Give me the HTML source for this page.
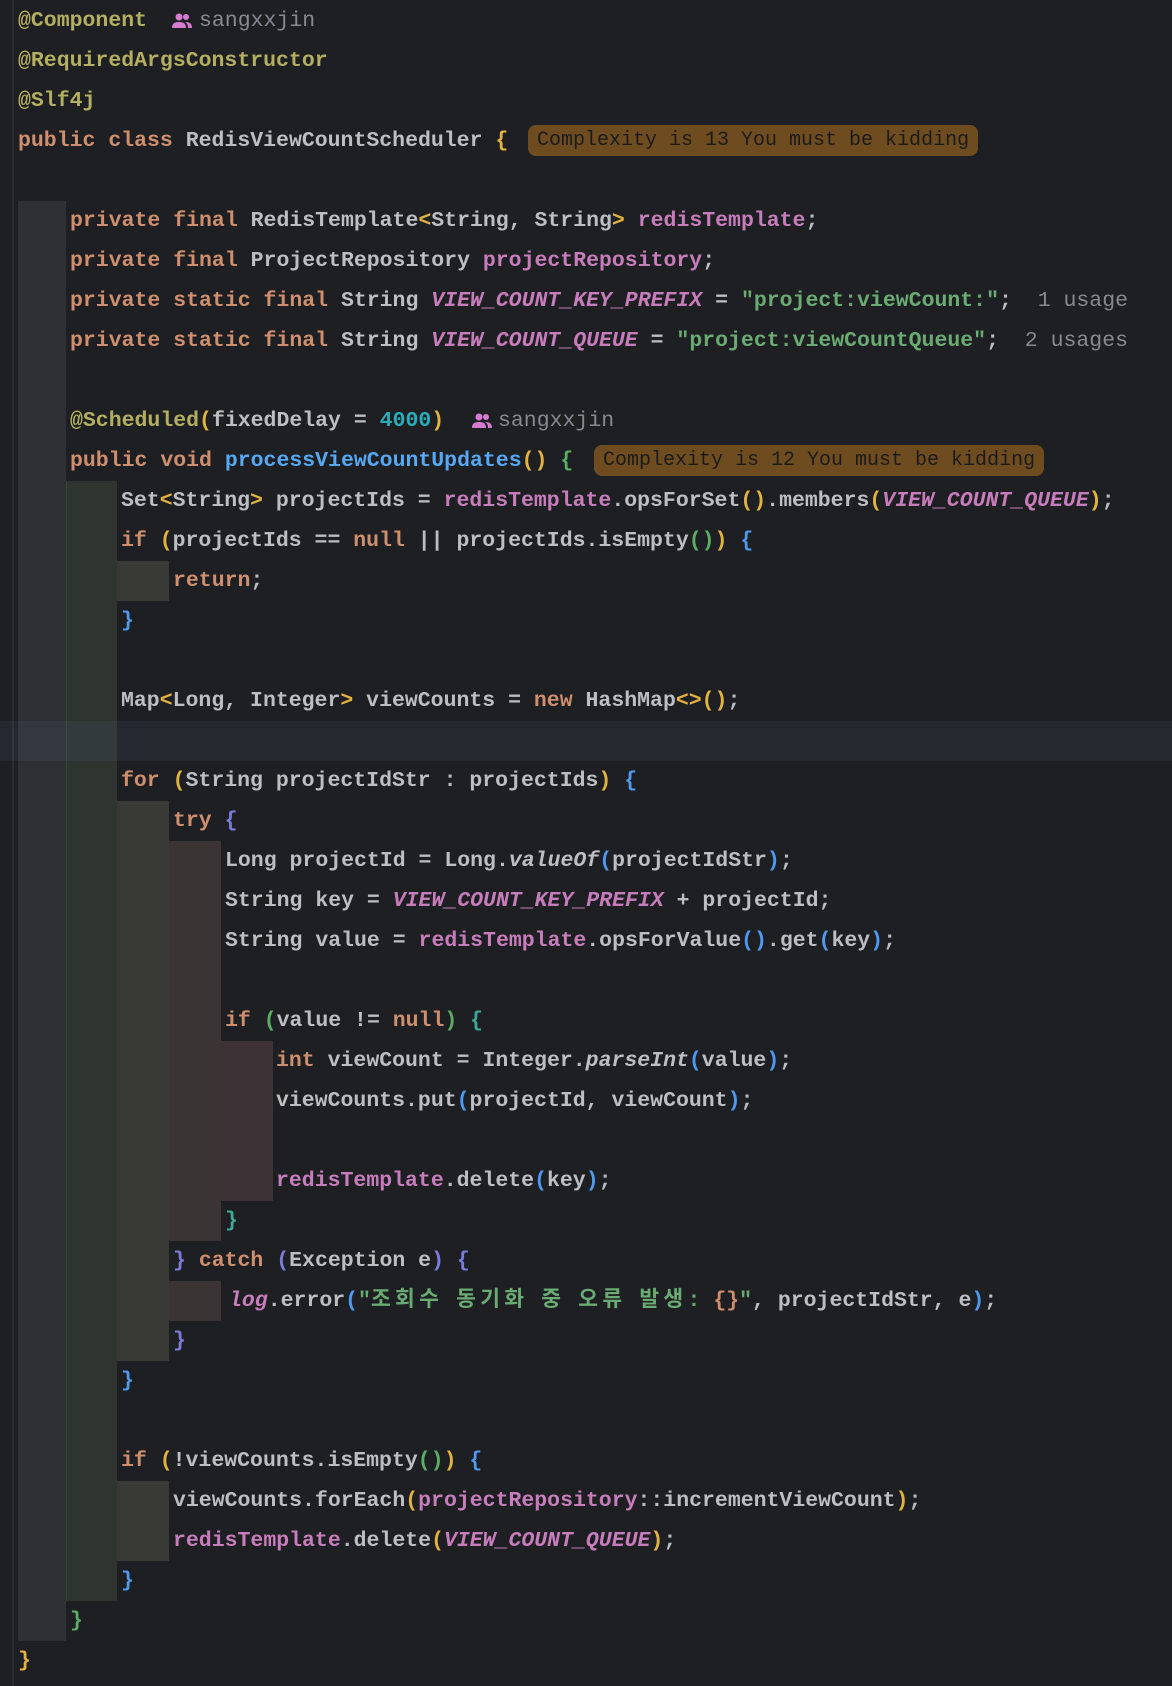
<!DOCTYPE html>
<html><head><meta charset="utf-8"><style>
html,body{margin:0;padding:0;}
body{width:1172px;height:1686px;background:#1e1f22;position:relative;overflow:hidden;font-family:"Liberation Mono","Noto Sans CJK KR",monospace;font-size:21.5px;color:#bcbec4;font-weight:bold;}
.l{position:absolute;height:40px;line-height:40px;white-space:pre;left:18px;}
.b{position:absolute;}
.k{color:#cf8e6d}.a{color:#b3ae60}.f{color:#c77dbb}.s{color:#6aab73}.n{color:#2aacb8}.m{color:#56a8f5}.g{color:#868a91;font-weight:normal}.i{font-style:italic}
.y{color:#e3b341}.gr{color:#5aaf65}.bl{color:#4d9af0}.p{color:#7a7ddc}.t{color:#3fa89a}.o{color:#cf8e6d}
.badge{position:absolute;background:#6f4c20;color:#1b1b1b;border-radius:8px;height:31px;line-height:31px;padding:0 9px;white-space:pre;font-size:20px;font-weight:normal;}
.hg{letter-spacing:4.3px}
</style></head><body>
<div class="b" style="left:12px;top:0;width:2px;height:1686px;background:#2b2d30"></div>
<div class="b" style="left:18px;top:201px;width:48px;height:1440px;background:#2f3035"></div>
<div class="b" style="left:66px;top:481px;width:51px;height:1120px;background:#2e3430"></div>
<div class="b" style="left:66px;top:481px;width:1px;height:1120px;background:#2f4a30"></div>
<div class="b" style="left:117px;top:561px;width:52px;height:40px;background:#393a36"></div>
<div class="b" style="left:117px;top:801px;width:52px;height:560px;background:#393a36"></div>
<div class="b" style="left:117px;top:1481px;width:52px;height:80px;background:#393a36"></div>
<div class="b" style="left:169px;top:841px;width:52px;height:400px;background:#3a3534"></div>
<div class="b" style="left:169px;top:1281px;width:52px;height:40px;background:#3a3534"></div>
<div class="b" style="left:221px;top:1041px;width:52px;height:160px;background:#3d3336"></div>
<div class="b" style="left:0;top:721px;width:1172px;height:40px;background:rgba(90,110,150,0.12)"></div>

<div class="l a" style="top:1px">@Component</div>
<svg class="b" style="left:172px;top:12px" width="20" height="18" viewBox="0 0 20 18"><circle cx="7" cy="5" r="3.5" fill="#d57bd0"/><circle cx="14" cy="5" r="3" fill="#d57bd0"/><path d="M0 16c0-5 3-6 7-6s7 1 7 6z" fill="#d57bd0"/><path d="M13 10c4 0 7 1 7 6h-4c0-3-1-5-3-6z" fill="#d57bd0"/></svg>
<div class="l g" style="top:1px;left:199px">sangxxjin</div>
<div class="l a" style="top:41px">@RequiredArgsConstructor</div>
<div class="l a" style="top:81px">@Slf4j</div>
<div class="l" style="top:121px"><span class="k">public class</span> RedisViewCountScheduler <span class="y">{</span></div>
<div class="badge" style="left:528px;top:125px">Complexity is 13 You must be kidding</div>

<div class="l" style="top:201px;left:70px"><span class="k">private final</span> RedisTemplate<span class="y">&lt;</span>String, String<span class="y">&gt;</span> <span class="f">redisTemplate</span>;</div>
<div class="l" style="top:241px;left:70px"><span class="k">private final</span> ProjectRepository <span class="f">projectRepository</span>;</div>
<div class="l" style="top:281px;left:70px"><span class="k">private static final</span> String <span class="f i">VIEW_COUNT_KEY_PREFIX</span> = <span class="s">"project:viewCount:"</span>;  <span class="g">1 usage</span></div>
<div class="l" style="top:321px;left:70px"><span class="k">private static final</span> String <span class="f i">VIEW_COUNT_QUEUE</span> = <span class="s">"project:viewCountQueue"</span>;  <span class="g">2 usages</span></div>

<div class="l" style="top:401px;left:70px"><span class="a">@Scheduled</span><span class="y">(</span>fixedDelay = <span class="n">4000</span><span class="y">)</span></div>
<svg class="b" style="left:472px;top:412px" width="20" height="18" viewBox="0 0 20 18"><circle cx="7" cy="5" r="3.5" fill="#d57bd0"/><circle cx="14" cy="5" r="3" fill="#d57bd0"/><path d="M0 16c0-5 3-6 7-6s7 1 7 6z" fill="#d57bd0"/><path d="M13 10c4 0 7 1 7 6h-4c0-3-1-5-3-6z" fill="#d57bd0"/></svg>
<div class="l g" style="top:401px;left:498px">sangxxjin</div>
<div class="l" style="top:441px;left:70px"><span class="k">public void</span> <span class="m">processViewCountUpdates</span><span class="y">()</span> <span class="gr">{</span></div>
<div class="badge" style="left:594px;top:445px">Complexity is 12 You must be kidding</div>
<div class="l" style="top:481px;left:121px">Set<span class="y">&lt;</span>String<span class="y">&gt;</span> projectIds = <span class="f">redisTemplate</span>.opsForSet<span class="y">()</span>.members<span class="y">(</span><span class="f i">VIEW_COUNT_QUEUE</span><span class="y">)</span>;</div>
<div class="l" style="top:521px;left:121px"><span class="k">if</span> <span class="y">(</span>projectIds == <span class="k">null</span> || projectIds.isEmpty<span class="gr">()</span><span class="y">)</span> <span class="bl">{</span></div>
<div class="l k" style="top:561px;left:173px">return<span style="color:#bcbec4">;</span></div>
<div class="l bl" style="top:601px;left:121px">}</div>
<div class="l" style="top:681px;left:121px">Map<span class="y">&lt;</span>Long, Integer<span class="y">&gt;</span> viewCounts = <span class="k">new</span> HashMap<span class="y">&lt;&gt;</span><span class="y">()</span>;</div>
<div class="l" style="top:761px;left:121px"><span class="k">for</span> <span class="y">(</span>String projectIdStr : projectIds<span class="y">)</span> <span class="bl">{</span></div>
<div class="l" style="top:801px;left:173px"><span class="k">try</span> <span class="p">{</span></div>
<div class="l" style="top:841px;left:225px">Long projectId = Long.<span class="i">valueOf</span><span class="bl">(</span>projectIdStr<span class="bl">)</span>;</div>
<div class="l" style="top:881px;left:225px">String key = <span class="f i">VIEW_COUNT_KEY_PREFIX</span> + projectId;</div>
<div class="l" style="top:921px;left:225px">String value = <span class="f">redisTemplate</span>.opsForValue<span class="bl">()</span>.get<span class="bl">(</span>key<span class="bl">)</span>;</div>
<div class="l" style="top:1001px;left:225px"><span class="k">if</span> <span class="gr">(</span>value != <span class="k">null</span><span class="gr">)</span> <span class="t">{</span></div>
<div class="l" style="top:1041px;left:276px"><span class="k">int</span> viewCount = Integer.<span class="i">parseInt</span><span class="bl">(</span>value<span class="bl">)</span>;</div>
<div class="l" style="top:1081px;left:276px">viewCounts.put<span class="bl">(</span>projectId, viewCount<span class="bl">)</span>;</div>
<div class="l" style="top:1161px;left:276px"><span class="f">redisTemplate</span>.delete<span class="bl">(</span>key<span class="bl">)</span>;</div>
<div class="l t" style="top:1201px;left:225px">}</div>
<div class="l" style="top:1241px;left:173px"><span class="p">}</span> <span class="k">catch</span> <span class="p">(</span>Exception e<span class="p">)</span> <span class="p">{</span></div>
<div class="l" style="top:1281px;left:229px"><span class="f i">log</span>.error<span class="bl">(</span><span class="s">"<span class="hg">조회수</span> <span class="hg">동기화</span> <span class="hg">중</span> <span class="hg">오류</span> <span class="hg">발생</span>: <span class="o">{}</span>"</span>, projectIdStr, e<span class="bl">)</span>;</div>
<div class="l p" style="top:1321px;left:173px">}</div>
<div class="l bl" style="top:1361px;left:121px">}</div>
<div class="l" style="top:1441px;left:121px"><span class="k">if</span> <span class="y">(</span>!viewCounts.isEmpty<span class="gr">()</span><span class="y">)</span> <span class="bl">{</span></div>
<div class="l" style="top:1481px;left:173px">viewCounts.forEach<span class="y">(</span><span class="f">projectRepository</span>::incrementViewCount<span class="y">)</span>;</div>
<div class="l" style="top:1521px;left:173px"><span class="f">redisTemplate</span>.delete<span class="y">(</span><span class="f i">VIEW_COUNT_QUEUE</span><span class="y">)</span>;</div>
<div class="l bl" style="top:1561px;left:121px">}</div>
<div class="l gr" style="top:1601px;left:70px">}</div>
<div class="l y" style="top:1641px">}</div>
</body></html>
